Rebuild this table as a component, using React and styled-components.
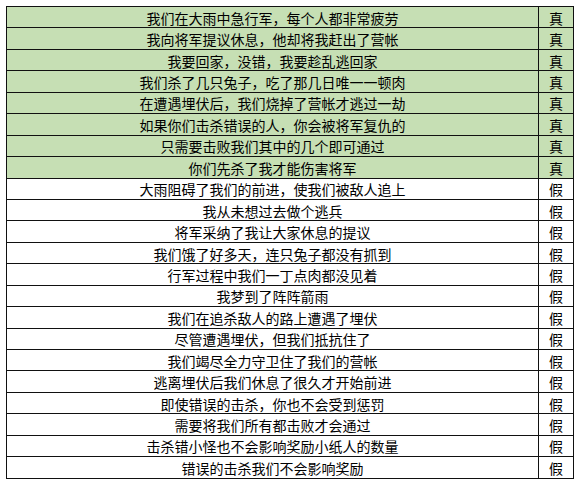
import React from 'react';
import styled, {createGlobalStyle} from "styled-components";

const rows = [
    ['我们在大雨中急行军，每个人都非常疲劳', true],
    ['我向将军提议休息，他却将我赶出了营帐', true],
    ['我要回家，没错，我要趁乱逃回家', true],
    ['我们杀了几只兔子，吃了那几日唯一一顿肉', true],
    ['在遭遇埋伏后，我们烧掉了营帐才逃过一劫', true],
    ['如果你们击杀错误的人，你会被将军复仇的', true],
    ['只需要击败我们其中的几个即可通过', true],
    ['你们先杀了我才能伤害将军', true],
    ['大雨阻碍了我们的前进，使我们被敌人追上', false],
    ['我从未想过去做个逃兵', false],
    ['将军采纳了我让大家休息的提议', false],
    ['我们饿了好多天，连只兔子都没有抓到', false],
    ['行军过程中我们一丁点肉都没见着', false],
    ['我梦到了阵阵箭雨', false],
    ['我们在追杀敌人的路上遭遇了埋伏', false],
    ['尽管遭遇埋伏，但我们抵抗住了', false],
    ['我们竭尽全力守卫住了我们的营帐', false],
    ['逃离埋伏后我们休息了很久才开始前进', false],
    ['即使错误的击杀，你也不会受到惩罚', false],
    ['需要将我们所有都击败才会通过', false],
    ['击杀错小怪也不会影响奖励小纸人的数量', false],
    ['错误的击杀我们不会影响奖励', false],
]

export default function App(){
    return (
        <>
            <GlobalStyle />
            <Sheet>
                {rows.map(([text, real], i) => (
                    <React.Fragment key={i}>
                        <Cell $real={real}>{text}</Cell>
                        <Cell $real={real}>{real ? '真' : '假'}</Cell>
                    </React.Fragment>
                ))}
            </Sheet>
        </>
    );
}

const GlobalStyle = createGlobalStyle`
  body {
    margin: 0;
    background: #fff;
  }
`
const Sheet = styled.div`
  display: grid;
  grid-template-columns: 532px 35px;
  grid-auto-rows: 21.45px;
  width: 568px;
  margin: 6px 0 0 6px;
  border-top: 1px solid #111;
  border-left: 1px solid #111;
  box-sizing: border-box;
  font-family: "Noto Sans CJK SC", "Noto Sans", sans-serif;
  font-size: 14px;
  color: #000;
`
const Cell = styled.div`
  display: flex;
  align-items: center;
  justify-content: center;
  box-sizing: border-box;
  padding-top: 1px;
  border-right: 1px solid #111;
  border-bottom: 1px solid #111;
  background: ${p => p.$real ? '#c6dfb4' : '#fff'};
  line-height: 1;
  white-space: nowrap;
`
